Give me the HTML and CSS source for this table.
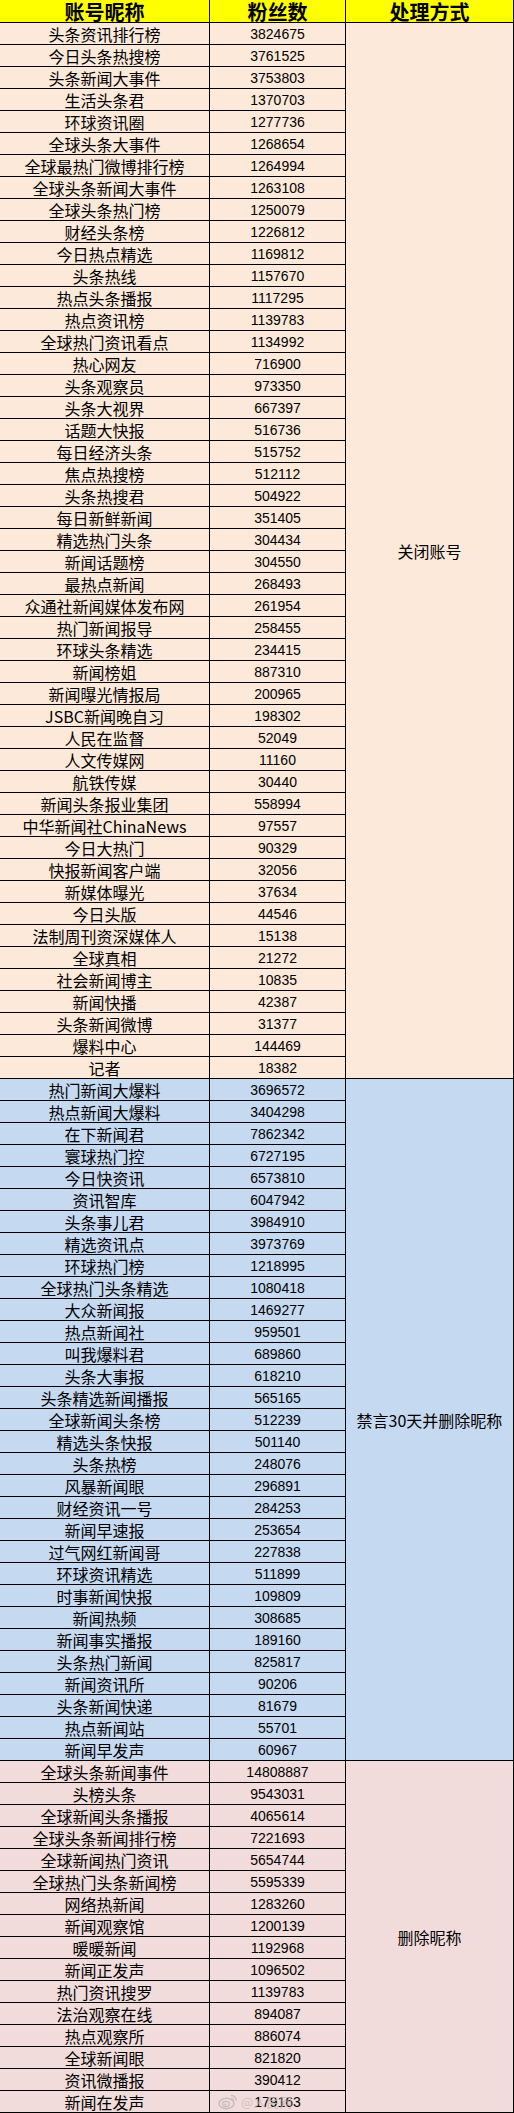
FILE: index.html
```html
<!DOCTYPE html>
<html lang="zh-CN">
<head>
<meta charset="utf-8">
<title>账号处理名单</title>
<link rel="stylesheet" href="styles.css">
</head>
<body>
<main class="sheet">
  <div class="head">
    <div class="hcell c1">账号昵称</div>
    <div class="hcell c2">粉丝数</div>
    <div class="hcell c3">处理方式</div>
  </div>

  <section class="group g1">
    <div class="rows">
      <div class="row"><div class="name">头条资讯排行榜</div><div class="num">3824675</div></div>
      <div class="row"><div class="name">今日头条热搜榜</div><div class="num">3761525</div></div>
      <div class="row"><div class="name">头条新闻大事件</div><div class="num">3753803</div></div>
      <div class="row"><div class="name">生活头条君</div><div class="num">1370703</div></div>
      <div class="row"><div class="name">环球资讯圈</div><div class="num">1277736</div></div>
      <div class="row"><div class="name">全球头条大事件</div><div class="num">1268654</div></div>
      <div class="row"><div class="name">全球最热门微博排行榜</div><div class="num">1264994</div></div>
      <div class="row"><div class="name">全球头条新闻大事件</div><div class="num">1263108</div></div>
      <div class="row"><div class="name">全球头条热门榜</div><div class="num">1250079</div></div>
      <div class="row"><div class="name">财经头条榜</div><div class="num">1226812</div></div>
      <div class="row"><div class="name">今日热点精选</div><div class="num">1169812</div></div>
      <div class="row"><div class="name">头条热线</div><div class="num">1157670</div></div>
      <div class="row"><div class="name">热点头条播报</div><div class="num">1117295</div></div>
      <div class="row"><div class="name">热点资讯榜</div><div class="num">1139783</div></div>
      <div class="row"><div class="name">全球热门资讯看点</div><div class="num">1134992</div></div>
      <div class="row"><div class="name">热心网友</div><div class="num">716900</div></div>
      <div class="row"><div class="name">头条观察员</div><div class="num">973350</div></div>
      <div class="row"><div class="name">头条大视界</div><div class="num">667397</div></div>
      <div class="row"><div class="name">话题大快报</div><div class="num">516736</div></div>
      <div class="row"><div class="name">每日经济头条</div><div class="num">515752</div></div>
      <div class="row"><div class="name">焦点热搜榜</div><div class="num">512112</div></div>
      <div class="row"><div class="name">头条热搜君</div><div class="num">504922</div></div>
      <div class="row"><div class="name">每日新鲜新闻</div><div class="num">351405</div></div>
      <div class="row"><div class="name">精选热门头条</div><div class="num">304434</div></div>
      <div class="row"><div class="name">新闻话题榜</div><div class="num">304550</div></div>
      <div class="row"><div class="name">最热点新闻</div><div class="num">268493</div></div>
      <div class="row"><div class="name">众通社新闻媒体发布网</div><div class="num">261954</div></div>
      <div class="row"><div class="name">热门新闻报导</div><div class="num">258455</div></div>
      <div class="row"><div class="name">环球头条精选</div><div class="num">234415</div></div>
      <div class="row"><div class="name">新闻榜姐</div><div class="num">887310</div></div>
      <div class="row"><div class="name">新闻曝光情报局</div><div class="num">200965</div></div>
      <div class="row"><div class="name">JSBC新闻晚自习</div><div class="num">198302</div></div>
      <div class="row"><div class="name">人民在监督</div><div class="num">52049</div></div>
      <div class="row"><div class="name">人文传媒网</div><div class="num">11160</div></div>
      <div class="row"><div class="name">航铁传媒</div><div class="num">30440</div></div>
      <div class="row"><div class="name">新闻头条报业集团</div><div class="num">558994</div></div>
      <div class="row"><div class="name">中华新闻社ChinaNews</div><div class="num">97557</div></div>
      <div class="row"><div class="name">今日大热门</div><div class="num">90329</div></div>
      <div class="row"><div class="name">快报新闻客户端</div><div class="num">32056</div></div>
      <div class="row"><div class="name">新媒体曝光</div><div class="num">37634</div></div>
      <div class="row"><div class="name">今日头版</div><div class="num">44546</div></div>
      <div class="row"><div class="name">法制周刊资深媒体人</div><div class="num">15138</div></div>
      <div class="row"><div class="name">全球真相</div><div class="num">21272</div></div>
      <div class="row"><div class="name">社会新闻博主</div><div class="num">10835</div></div>
      <div class="row"><div class="name">新闻快播</div><div class="num">42387</div></div>
      <div class="row"><div class="name">头条新闻微博</div><div class="num">31377</div></div>
      <div class="row"><div class="name">爆料中心</div><div class="num">144469</div></div>
      <div class="row"><div class="name">记者</div><div class="num">18382</div></div>
    </div>
    <div class="action">关闭账号</div>
  </section>

  <section class="group g2">
    <div class="rows">
      <div class="row"><div class="name">热门新闻大爆料</div><div class="num">3696572</div></div>
      <div class="row"><div class="name">热点新闻大爆料</div><div class="num">3404298</div></div>
      <div class="row"><div class="name">在下新闻君</div><div class="num">7862342</div></div>
      <div class="row"><div class="name">寰球热门控</div><div class="num">6727195</div></div>
      <div class="row"><div class="name">今日快资讯</div><div class="num">6573810</div></div>
      <div class="row"><div class="name">资讯智库</div><div class="num">6047942</div></div>
      <div class="row"><div class="name">头条事儿君</div><div class="num">3984910</div></div>
      <div class="row"><div class="name">精选资讯点</div><div class="num">3973769</div></div>
      <div class="row"><div class="name">环球热门榜</div><div class="num">1218995</div></div>
      <div class="row"><div class="name">全球热门头条精选</div><div class="num">1080418</div></div>
      <div class="row"><div class="name">大众新闻报</div><div class="num">1469277</div></div>
      <div class="row"><div class="name">热点新闻社</div><div class="num">959501</div></div>
      <div class="row"><div class="name">叫我爆料君</div><div class="num">689860</div></div>
      <div class="row"><div class="name">头条大事报</div><div class="num">618210</div></div>
      <div class="row"><div class="name">头条精选新闻播报</div><div class="num">565165</div></div>
      <div class="row"><div class="name">全球新闻头条榜</div><div class="num">512239</div></div>
      <div class="row"><div class="name">精选头条快报</div><div class="num">501140</div></div>
      <div class="row"><div class="name">头条热榜</div><div class="num">248076</div></div>
      <div class="row"><div class="name">风暴新闻眼</div><div class="num">296891</div></div>
      <div class="row"><div class="name">财经资讯一号</div><div class="num">284253</div></div>
      <div class="row"><div class="name">新闻早速报</div><div class="num">253654</div></div>
      <div class="row"><div class="name">过气网红新闻哥</div><div class="num">227838</div></div>
      <div class="row"><div class="name">环球资讯精选</div><div class="num">511899</div></div>
      <div class="row"><div class="name">时事新闻快报</div><div class="num">109809</div></div>
      <div class="row"><div class="name">新闻热频</div><div class="num">308685</div></div>
      <div class="row"><div class="name">新闻事实播报</div><div class="num">189160</div></div>
      <div class="row"><div class="name">头条热门新闻</div><div class="num">825817</div></div>
      <div class="row"><div class="name">新闻资讯所</div><div class="num">90206</div></div>
      <div class="row"><div class="name">头条新闻快递</div><div class="num">81679</div></div>
      <div class="row"><div class="name">热点新闻站</div><div class="num">55701</div></div>
      <div class="row"><div class="name">新闻早发声</div><div class="num">60967</div></div>
    </div>
    <div class="action">禁言30天并删除昵称</div>
  </section>

  <section class="group g3">
    <div class="rows">
      <div class="row"><div class="name">全球头条新闻事件</div><div class="num">14808887</div></div>
      <div class="row"><div class="name">头榜头条</div><div class="num">9543031</div></div>
      <div class="row"><div class="name">全球新闻头条播报</div><div class="num">4065614</div></div>
      <div class="row"><div class="name">全球头条新闻排行榜</div><div class="num">7221693</div></div>
      <div class="row"><div class="name">全球新闻热门资讯</div><div class="num">5654744</div></div>
      <div class="row"><div class="name">全球热门头条新闻榜</div><div class="num">5595339</div></div>
      <div class="row"><div class="name">网络热新闻</div><div class="num">1283260</div></div>
      <div class="row"><div class="name">新闻观察馆</div><div class="num">1200139</div></div>
      <div class="row"><div class="name">暖暖新闻</div><div class="num">1192968</div></div>
      <div class="row"><div class="name">新闻正发声</div><div class="num">1096502</div></div>
      <div class="row"><div class="name">热门资讯搜罗</div><div class="num">1139783</div></div>
      <div class="row"><div class="name">法治观察在线</div><div class="num">894087</div></div>
      <div class="row"><div class="name">热点观察所</div><div class="num">886074</div></div>
      <div class="row"><div class="name">全球新闻眼</div><div class="num">821820</div></div>
      <div class="row"><div class="name">资讯微播报</div><div class="num">390412</div></div>
      <div class="row"><div class="name">新闻在发声</div><div class="num">179163</div></div>
    </div>
    <div class="action">删除昵称</div>
  </section>

  <div class="watermark">
    <svg class="wb-logo" width="20" height="17" viewBox="0 0 20 17" aria-hidden="true">
      <ellipse cx="8.5" cy="10.5" rx="7.5" ry="5.2" fill="none" stroke="#b8b0b0" stroke-width="1.4"/>
      <ellipse cx="8" cy="11" rx="3.4" ry="2.6" fill="none" stroke="#b8b0b0" stroke-width="1.2"/>
      <circle cx="7.4" cy="11.4" r="1" fill="#b8b0b0"/>
      <path d="M13 2.5a5 5 0 0 1 5.2 5.2" fill="none" stroke="#b8b0b0" stroke-width="1.3"/>
      <path d="M13.2 5.2a2.4 2.4 0 0 1 2.4 2.4" fill="none" stroke="#b8b0b0" stroke-width="1.1"/>
    </svg>
    <span class="wb-text">@人民网</span>
  </div>
</main>
</body>
</html>
```

FILE: styles.css
```css
html, body {
  margin: 0;
  padding: 0;
  background: #ffffff;
}

.sheet {
  position: relative;
  width: 514px;
  color: #000;
  font-family: "Noto Sans CJK SC", "Noto Sans", sans-serif;
}

.head {
  display: flex;
  height: 23px;
  background: #ffff00;
}

.hcell {
  box-sizing: border-box;
  height: 23px;
  border-right: 1px solid #000;
  border-bottom: 1px solid #000;
  display: flex;
  align-items: center;
  justify-content: center;
  font-size: 20px;
  font-weight: 700;
  line-height: 1;
  padding-top: 2px;
}

.c1 { width: 210px; }
.c2 { width: 136px; }
.c3 { width: 168px; }

.group {
  display: flex;
}

.g1 { background: #fde9d9; }
.g2 { background: #c5d9f1; }
.g3 { background: #f2dcdb; }

.rows {
  display: flex;
  flex-direction: column;
  width: 346px;
}

.row {
  display: flex;
  height: 22px;
}

.name,
.num,
.action {
  box-sizing: border-box;
  border-right: 1px solid #000;
  border-bottom: 1px solid #000;
  display: flex;
  align-items: center;
  justify-content: center;
  white-space: nowrap;
}

.name {
  width: 210px;
  font-size: 16px;
  line-height: 1;
  padding-top: 1px;
}

.num {
  width: 136px;
  font-family: "Liberation Sans", sans-serif;
  font-size: 14px;
  line-height: 1;
  padding-top: 1px;
}

.action {
  width: 168px;
  font-size: 16px;
  line-height: 1;
}

.watermark {
  position: absolute;
  left: 218px;
  top: 2093px;
  display: flex;
  align-items: center;
  gap: 3px;
  opacity: 0.75;
}

.wb-text {
  font-size: 13px;
  line-height: 1;
  color: #c2b8b8;
}
```
